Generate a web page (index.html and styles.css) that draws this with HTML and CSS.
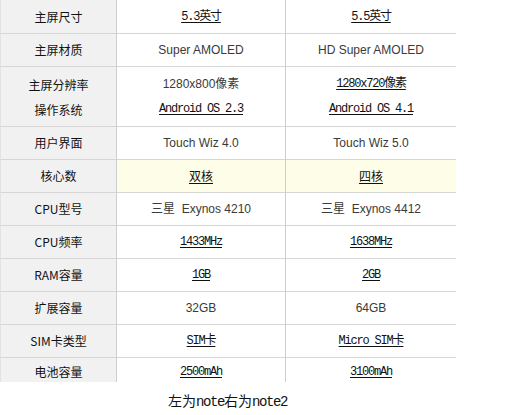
FILE: index.html
```html
<!DOCTYPE html>
<html lang="zh-CN">
<head>
<meta charset="utf-8">
<title>note vs note2</title>
<link rel="stylesheet" href="styles.css">
</head>
<body>
<div class="spec">
  <div class="grid">
    <div class="cell label first">主屏尺寸</div>
    <div class="cell v first"><span class="mono u">5.3英寸</span></div>
    <div class="cell v last-col first"><span class="mono u">5.5英寸</span></div>

    <div class="cell label">主屏材质</div>
    <div class="cell v"><span class="sans">Super AMOLED</span></div>
    <div class="cell v last-col"><span class="sans">HD Super AMOLED</span></div>

    <div class="cell label double"><span>主屏分辨率</span><span>操作系统</span></div>
    <div class="cell v double"><span class="sans">1280x800像素</span><span class="mono u">Android OS 2.3</span></div>
    <div class="cell v last-col double"><span class="mono u">1280x720像素</span><span class="mono u">Android OS 4.1</span></div>

    <div class="cell label">用户界面</div>
    <div class="cell v"><span class="sans">Touch Wiz 4.0</span></div>
    <div class="cell v last-col"><span class="sans">Touch Wiz 5.0</span></div>

    <div class="cell label">核心数</div>
    <div class="cell v hl"><span class="cjk u">双核</span></div>
    <div class="cell v last-col hl"><span class="cjk u">四核</span></div>

    <div class="cell label">CPU型号</div>
    <div class="cell v"><span class="sans">三星&nbsp; Exynos 4210</span></div>
    <div class="cell v last-col"><span class="sans">三星&nbsp; Exynos 4412</span></div>

    <div class="cell label">CPU频率</div>
    <div class="cell v"><span class="mono u">1433MHz</span></div>
    <div class="cell v last-col"><span class="mono u">1638MHz</span></div>

    <div class="cell label">RAM容量</div>
    <div class="cell v"><span class="mono u">1GB</span></div>
    <div class="cell v last-col"><span class="mono u">2GB</span></div>

    <div class="cell label">扩展容量</div>
    <div class="cell v"><span class="sans">32GB</span></div>
    <div class="cell v last-col"><span class="sans">64GB</span></div>

    <div class="cell label">SIM卡类型</div>
    <div class="cell v"><span class="mono u">SIM卡</span></div>
    <div class="cell v last-col"><span class="mono u">Micro SIM卡</span></div>

    <div class="cell label last">电池容量</div>
    <div class="cell v last"><span class="mono u">2500mAh</span></div>
    <div class="cell v last-col last"><span class="mono u">3100mAh</span></div>
  </div>
  <p class="caption">左为<span class="cap-mono">note</span>右为<span class="cap-mono">note2</span></p>
</div>
</body>
</html>
```

FILE: styles.css
```css
html, body {
  margin: 0;
  padding: 0;
  background: #ffffff;
}

body {
  font-family: "Noto Sans CJK SC", sans-serif;
  font-size: 12px;
  color: #111;
}

.spec {
  width: 455px;
}

.grid {
  display: grid;
  grid-template-columns: 117px 169px 170px;
}

.cell {
  height: 32px;
  border-bottom: 1px solid #d6d6d6;
  display: flex;
  flex-direction: column;
  align-items: center;
  justify-content: center;
  text-align: center;
  white-space: nowrap;
  overflow: hidden;
  line-height: 16px;
}

.cell.first {
  height: 33px;
}

.cell.double {
  height: 59px;
  line-height: 25px;
}

.label {
  background: #f1f1f1;
  border-left: 1px solid #e2e2e2;
  border-right: 1px solid #cdcdcd;
  color: #111;
  font-family: "Noto Sans CJK SC", sans-serif;
  font-size: 12px;
}

.v {
  border-right: 1px solid #cdcdcd;
}

.v.last-col {
  border-right: none;
}

.hl {
  background: #fefde8;
}

.cell.last {
  height: 24px;
  border-bottom: none;
  justify-content: flex-start;
  padding-top: 6px;
  box-sizing: border-box;
  height: 24px;
}

.sans {
  font-family: "Liberation Sans", "Noto Sans CJK SC", sans-serif;
  font-size: 12px;
  color: #3a3a3a;
}

.mono {
  font-family: "Liberation Mono", "Noto Sans CJK SC", monospace;
  font-size: 12px;
  letter-spacing: -1.2px;
  color: #111;
}

.cjk {
  font-family: "Noto Sans CJK SC", sans-serif;
  font-size: 12px;
  color: #111;
}

.u {
  text-decoration: underline;
  text-underline-offset: 2px;
}

.caption {
  margin: 8px 0 0;
  text-align: center;
  font-family: "Noto Sans CJK SC", sans-serif;
  font-size: 14px;
  line-height: 20px;
  color: #111;
}

.cap-mono {
  font-family: "Liberation Mono", monospace;
  font-size: 14px;
  letter-spacing: -1.4px;
}
```
